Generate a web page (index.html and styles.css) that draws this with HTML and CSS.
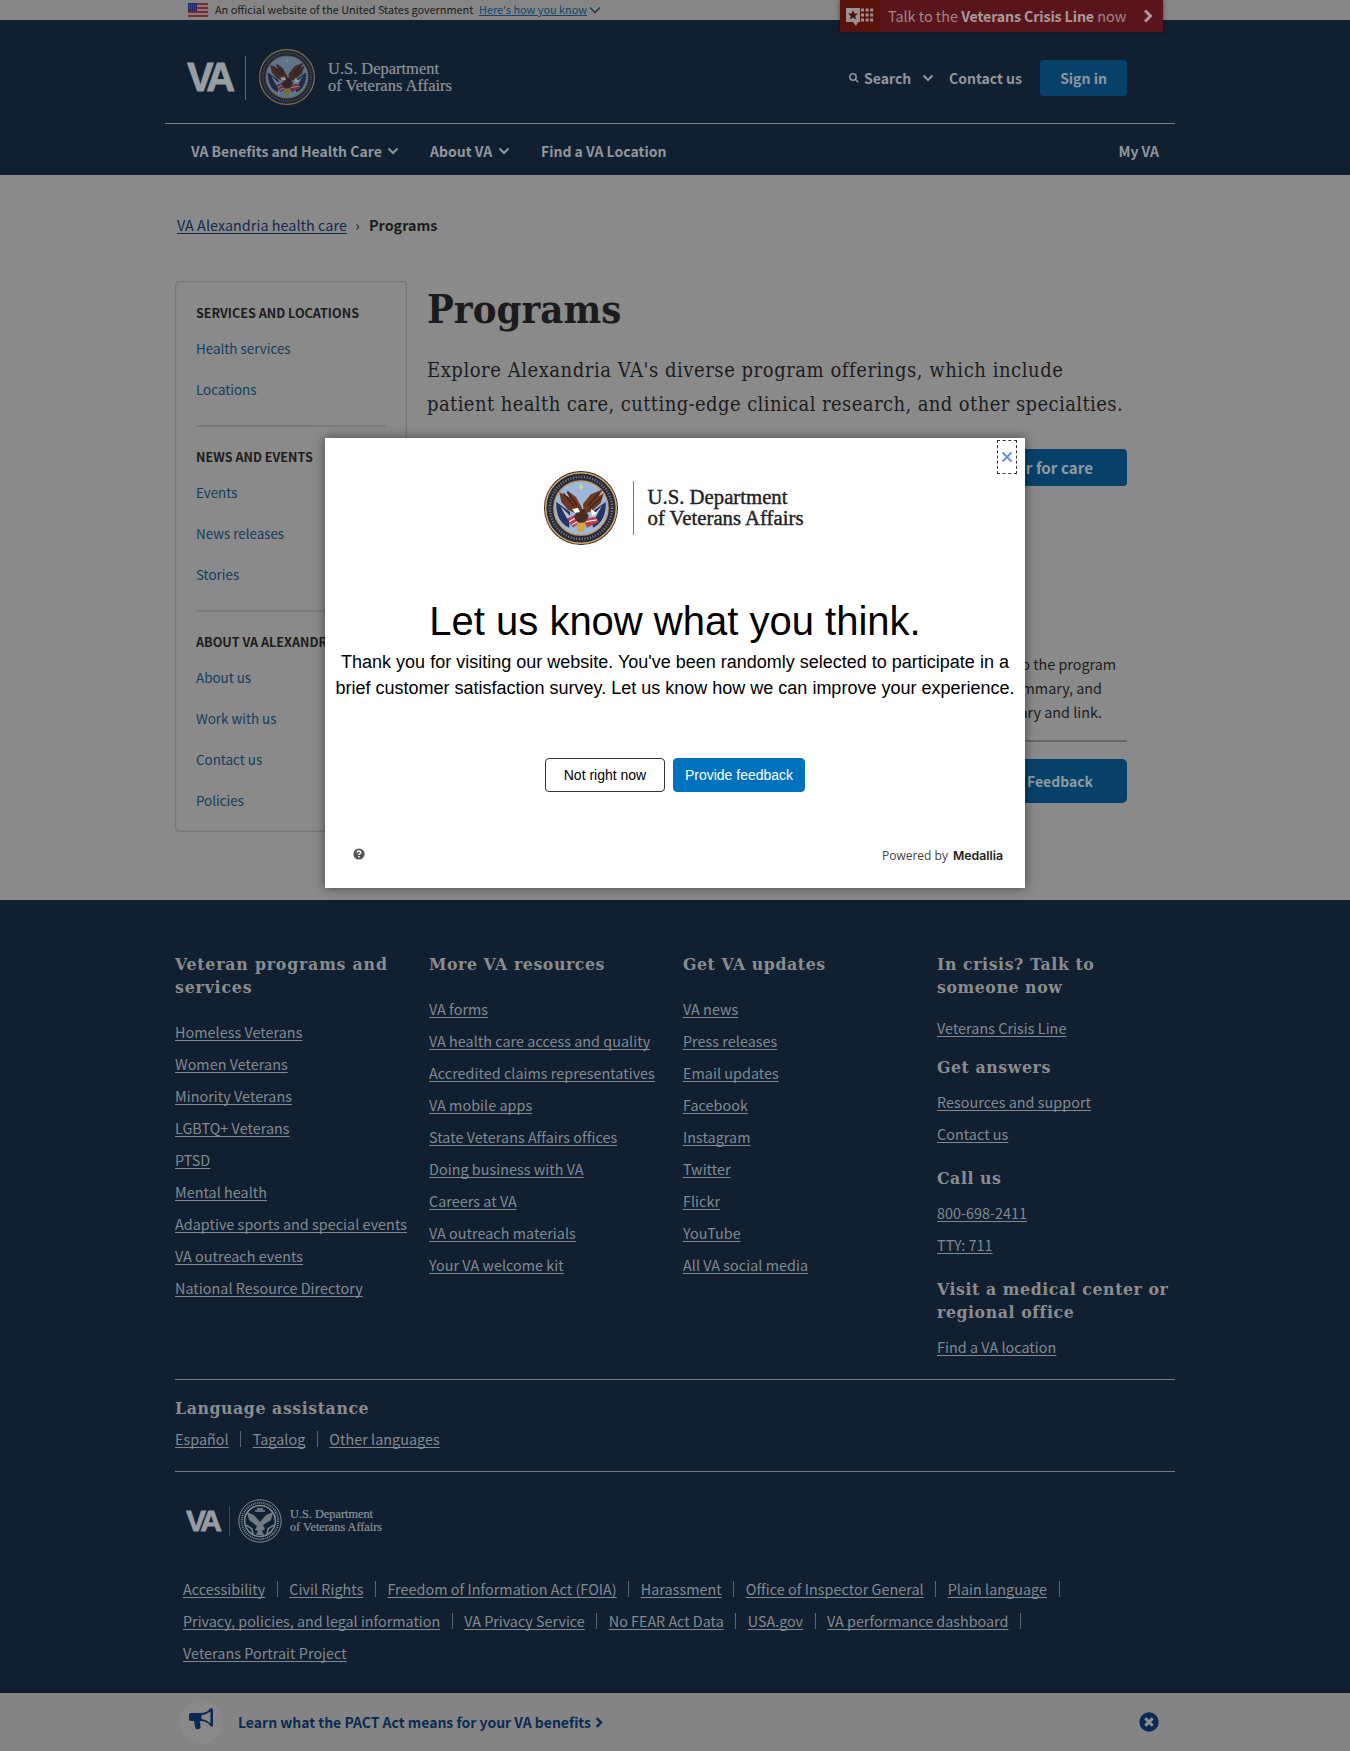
FILE: index.html
```html
<!DOCTYPE html>
<html lang="en">
<head>
<meta charset="utf-8">
<title>Programs | VA Alexandria health care</title>
<link rel="stylesheet" href="styles.css">
</head>
<body>
<svg class="defs" width="0" height="0">
  <symbol id="chev" viewBox="0 0 12 8"><path d="M1.500 1.500 6 6l4.500-4.500" fill="none" stroke="currentColor" stroke-width="2"/></symbol>
  <symbol id="chev-thin" viewBox="0 0 12 8"><path d="M1 1.500 6 6.500l5-5" fill="none" stroke="currentColor" stroke-width="1.300"/></symbol>
  <symbol id="chev-right" viewBox="0 0 10 14"><path d="m2 1.500 5.500 5.500L2 12.500" fill="none" stroke="currentColor" stroke-width="3"/></symbol>
  <symbol id="seal" viewBox="0 0 76 76">
    <circle cx="38" cy="38" r="37.500" fill="#33271d"/>
    <circle cx="38" cy="38" r="35.800" fill="none" stroke="#d0a970" stroke-width="1.600"/>
    <circle cx="38" cy="38" r="31.500" fill="none" stroke="#222b45" stroke-width="6"/>
    <circle cx="38" cy="38" r="31.500" fill="none" stroke="#8a7a60" stroke-width="2.600" stroke-dasharray="1.100 1.700"/>
    <circle cx="38" cy="38" r="27.500" fill="#9db8d8" stroke="#c69a61" stroke-width="1.400"/>
    <path d="M13 32 27 42l-1 16c-8-3-14-13-13-26zM63 32 49 42l1 16c8-3 14-13 13-26z" fill="#28345f"/>
    <path d="m17 36 11 11-4 2zM59 36 48 47l4 2z" fill="#b9c3d8"/>
    <path d="m24 49 12-6 3 8-9 7zM40 49l13-2 3 5-12 6z" fill="#b73e4b"/>
    <path d="m26 52 10-6M29 55l10-6M42 52l12-2" stroke="#f3e5e0" stroke-width="1.300"/>
    <path d="m16 22 2 10 7 8 12 5 2-7-6-11-9-7 2 7zM60 19l-12 5-8 10 1 10 8-3 9-8 3-10-5 3z" fill="#6b3820"/>
    <path d="m20 23 11 13M24 22l10 13M56 23 45 36M59 27 47 38" stroke="#3c2015" stroke-width="1.200"/>
    <path d="m34 40 7-1 5 7-4 7h-7l-4-5z" fill="#4c2b20"/>
    <path d="m29 39 6-1 2 4-5 1zM48 39l6 4-5 3z" fill="#fff"/>
    <path d="m34 52 4 2 4-2-1 10h-6z" fill="#d8a637"/>
    <path d="m36 17 2-4 2 4-2 3z" fill="#d5cfa5"/>
  </symbol>
  <symbol id="seal-mono" viewBox="0 0 44 44">
    <g fill="none" stroke="currentColor">
      <circle cx="22" cy="22" r="21.200"/>
      <circle cx="22" cy="22" r="18.200" stroke-width="2" stroke-dasharray="1 1"/>
      <circle cx="22" cy="22" r="15.400" stroke-width="1.500"/>
      <path d="m8 26 6 4 1 5m21-9-6 4-1 5" stroke-width="1.500"/>
      <path d="m19 10 6 0M17 12l10 0" stroke-width="1.500"/>
    </g>
    <path d="m9 13 2 8 8 6-2 4 3 1-2 4h8l-2-4 3-2-2-4 8-5 2-8-7 3-6 7-6-7z" fill="currentColor" opacity=".85"/>
  </symbol>
</svg>

<div class="gov-banner">
  <div class="gov-inner">
    <svg class="flag" viewBox="0 0 20 14"><path fill="#87797c" d="M0 0h20v14H0z"/><path d="M0 1h20M0 5h20M0 9h20M0 13h20" stroke="#7a2a32" stroke-width="1.900"/><path fill="#20286b" d="M0 0h9v8H0z"/><path d="M1 2h7M1 4h7M1 6h7" stroke="#6470a0" stroke-width=".8" stroke-dasharray="1 1"/></svg>
    <span class="gov-text">An official website of the United States government</span>
    <a class="gov-link">Here's how you know</a>
    <svg class="gov-chev"><use href="#chev-thin"/></svg>
  </div>
  <div class="crisis">
    <div class="crisis-icon"><svg viewBox="0 0 28 18" width="28" height="18"><path fill="#9b9390" d="M0 0h14v14h-2l-2 4-3-4H0z"/><path fill="#4a110c" d="m7 2 1.400 3.400 3.600.2-2.800 2.300 1 3.600L7 9.500l-3.200 2 1-3.600L2 5.600l3.600-.2z"/><path d="M15 2h13M15 7h13M15 12h13" stroke="#9b9390" stroke-width="3" stroke-dasharray="3 1.600"/></svg></div>
    <span class="crisis-text">Talk to the <b>Veterans Crisis Line</b> now</span>
    <svg class="crisis-chev"><use href="#chev-right"/></svg>
  </div>
</div>

<header class="header">
  <div class="header-top">
    <svg class="logo" viewBox="0 0 270 60" width="270" height="60">
      <text class="va-mark" x="0" y="43.500" font-size="40" letter-spacing="-4.500">VA</text>
      <path d="M58.500 9v44" stroke="#5b6772"/>
      <g opacity=".55"><use href="#seal" x="71" y="1" width="58" height="58"/></g>
      <text class="dept" x="141" y="27" font-size="16.500" textLength="111" lengthAdjust="spacingAndGlyphs">U.S. Department</text>
      <text class="dept" x="141" y="44" font-size="16.500" textLength="124" lengthAdjust="spacingAndGlyphs">of Veterans Affairs</text>
    </svg>
    <div class="tools">
      <svg class="search-icon" viewBox="0 0 10 10"><circle cx="4" cy="4" r="3.200" fill="none" stroke="currentColor" stroke-width="1.500"/><path d="m6.300 6.300 3 3" stroke="currentColor" stroke-width="1.500"/></svg>
      <span class="t-search">Search</span>
      <svg class="chev t-chev"><use href="#chev"/></svg>
      <span class="t-contact">Contact us</span>
      <span class="sign-in">Sign in</span>
    </div>
  </div>
  <nav class="nav">
    <span class="n1">VA Benefits and Health Care</span><svg class="chev"><use href="#chev"/></svg>
    <span class="n2">About VA</span><svg class="chev"><use href="#chev"/></svg>
    <span class="n3">Find a VA Location</span>
    <span class="n4">My VA</span>
  </nav>
</header>

<main class="main">
  <div class="crumbs"><a>VA Alexandria health care</a><i>›</i><b>Programs</b></div>
  <div class="columns">
    <aside class="side">
      <section><h2>SERVICES AND LOCATIONS</h2><a>Health services</a><a>Locations</a></section>
      <section><h2>NEWS AND EVENTS</h2><a>Events</a><a>News releases</a><a>Stories</a></section>
      <section><h2>ABOUT VA ALEXANDRIA</h2><a>About us</a><a>Work with us</a><a>Contact us</a><a>Policies</a></section>
    </aside>
    <article class="content">
      <h1>Programs</h1>
      <p class="intro"><span class="i1">Explore Alexandria VA's diverse program offerings, which include</span><br><span class="i2">patient health care, cutting-edge clinical research, and other specialties.</span></p>
      <div class="register">Register for care</div>
      <p class="notes"><span class="l1">to the program</span><span class="l2">summary, and</span><span class="l3">summary and link.</span></p>
      <hr>
      <div class="feedback">Feedback</div>
    </article>
  </div>
</main>

<footer class="footer">
  <div class="foot-inner">
    <div class="foot-cols">
      <div><h3 class="wide">Veteran programs and<br>services</h3>
        <ul><li><a>Homeless Veterans</a></li><li><a>Women Veterans</a></li><li><a>Minority Veterans</a></li><li><a>LGBTQ+ Veterans</a></li><li><a>PTSD</a></li><li><a>Mental health</a></li><li><a>Adaptive sports and special events</a></li><li><a>VA outreach events</a></li><li><a>National Resource Directory</a></li></ul></div>
      <div><h3>More VA resources</h3>
        <ul><li><a>VA forms</a></li><li><a>VA health care access and quality</a></li><li><a>Accredited claims representatives</a></li><li><a>VA mobile apps</a></li><li><a>State Veterans Affairs offices</a></li><li><a>Doing business with VA</a></li><li><a>Careers at VA</a></li><li><a>VA outreach materials</a></li><li><a>Your VA welcome kit</a></li></ul></div>
      <div><h3>Get VA updates</h3>
        <ul><li><a>VA news</a></li><li><a>Press releases</a></li><li><a>Email updates</a></li><li><a>Facebook</a></li><li><a>Instagram</a></li><li><a>Twitter</a></li><li><a>Flickr</a></li><li><a>YouTube</a></li><li><a>All VA social media</a></li></ul></div>
      <div class="contact-col"><h3>In crisis? Talk to<br>someone now</h3>
        <ul class="first"><li><a>Veterans Crisis Line</a></li></ul>
        <h3>Get answers</h3><ul><li><a>Resources and support</a></li><li><a>Contact us</a></li></ul>
        <h3>Call us</h3><ul><li><a>800-698-2411</a></li><li><a>TTY: 711</a></li></ul>
        <h3>Visit a medical center or<br>regional office</h3><ul><li><a>Find a VA location</a></li></ul></div>
    </div>
    <div class="language"><h3>Language assistance</h3>
      <div class="bar-list"><span><a>Español</a></span><span><a>Tagalog</a></span><span><a>Other languages</a></span></div>
    </div>
    <svg class="foot-logo" viewBox="0 0 200 46" width="200" height="46">
      <text class="va-mark" x="0" y="32.500" font-size="30" letter-spacing="-3.500">VA</text>
      <path d="M43.500 8v30" stroke="#3a4752"/>
      <use href="#seal-mono" x="52" y="1" width="44" height="44"/>
      <text class="dept" x="104" y="20" font-size="12" textLength="83" lengthAdjust="spacingAndGlyphs">U.S. Department</text>
      <text class="dept" x="104" y="32.500" font-size="12" textLength="92" lengthAdjust="spacingAndGlyphs">of Veterans Affairs</text>
    </svg>
    <div class="legal">
      <div class="bar-list open"><span><a>Accessibility</a></span><span><a>Civil Rights</a></span><span><a>Freedom of Information Act (FOIA)</a></span><span><a>Harassment</a></span><span><a>Office of Inspector General</a></span><span><a>Plain language</a></span></div>
      <div class="bar-list open tight"><span><a>Privacy, policies, and legal information</a></span><span><a>VA Privacy Service</a></span><span><a>No FEAR Act Data</a></span><span><a>USA.gov</a></span><span><a>VA performance dashboard</a></span></div>
      <div class="bar-list"><span><a>Veterans Portrait Project</a></span></div>
    </div>
  </div>
</footer>

<div class="promo">
  <div class="promo-icon"><svg viewBox="0 0 24 22" width="24" height="22"><path d="M0 7q0-2 2-2h9q7 0 10-4.500Q22-.5 24 1v17q-2 1.500-3-.5Q18 13 11.500 13l-.8 1q1 2 .8 3l-.5 1 1 2q-3 2-5.500.5L5 13H2q-2 0-2-2z" fill="#0b2a52"/><path d="M12.500 7.200q5-.5 9-3.700v12q-4-4-9-4.500z" fill="#888"/></svg></div>
  <b>Learn what the PACT Act means for your VA benefits</b>
  <svg class="promo-chev"><use href="#chev-right"/></svg>
  <svg class="promo-close" viewBox="0 0 20 20"><circle cx="10" cy="10" r="9.700" fill="#0b2a52"/><path d="m6.300 6.300 7.400 7.400m0-7.400-7.400 7.400" stroke="#8b9298" stroke-width="3"/></svg>
</div>

<div class="modal">
  <div class="modal-close"><svg viewBox="0 0 12 12" width="12" height="12"><path d="m1.500 1.500 9 9m0-9-9 9" stroke="#6f8fe6" stroke-width="2"/></svg></div>
  <svg class="modal-logo" viewBox="0 0 270 86" width="270" height="86">
    <use href="#seal" x="6.500" y="5.500" width="75" height="75"/>
    <path d="M96.500 16v54" stroke="#777"/>
    <text class="dept-dark" x="110.500" y="39" font-size="20.500" textLength="140" lengthAdjust="spacingAndGlyphs">U.S. Department</text>
    <text class="dept-dark" x="110.500" y="60" font-size="20.500" textLength="156" lengthAdjust="spacingAndGlyphs">of Veterans Affairs</text>
  </svg>
  <h2>Let us know what you think.</h2>
  <p>Thank you for visiting our website. You've been randomly selected to participate in a<br>brief customer satisfaction survey. Let us know how we can improve your experience.</p>
  <div class="modal-buttons"><span class="btn-no">Not right now</span><span class="btn-yes">Provide feedback</span></div>
  <div class="modal-foot">
    <svg viewBox="0 0 12 12" width="12" height="12"><circle cx="6" cy="6" r="5.600" fill="#555"/><path d="M4 4.700Q4.200 3 6 3t1.900 1.500Q7.900 5.500 6 6.300v.7M6 8v1.400" fill="none" stroke="#fff" stroke-width="1.400"/></svg>
    <span class="powered">Powered by</span><b>Medallia</b>
  </div>
</div>
</body>
</html>
```
FILE: styles.css
```css
* { box-sizing: border-box; }
body {
  margin: 0;
  position: relative;
  width: 1350px;
  height: 1751px;
  overflow: hidden;
  background: #8a8a8a;
  color: #1b1b1d;
  font-family: "Noto Sans CJK SC", "Open Sans", sans-serif;
  font-size: 14.33px;
  line-height: 24px;
}
h1, h2, h3, p, ul { margin: 0; padding: 0; }
ul { list-style: none; }
svg { display: block; flex: none; }
span, a, b { white-space: nowrap; }
.defs { position: absolute; }

.gov-banner { position: relative; height: 20px; background: #858585; }
.gov-inner { display: flex; align-items: center; padding-left: 188px; height: 20px; font-size: 10.9px; line-height: 18px; }
.flag { width: 20px; height: 14px; margin-right: 7px; }
.gov-text { width: 264px; height: 20px; }
.gov-link { width: 110px; height: 20px; color: #11466a; text-decoration: underline; }
.gov-chev { width: 12px; height: 8px; color: #11364f; }

.crisis { position: absolute; left: 840px; top: 0; width: 323px; height: 32px; display: flex; align-items: center; background: #5a151c; box-shadow: 0 0 4px rgba(0, 0, 0, .5); color: #9d8588; font-size: 14.5px; }
.crisis-icon { width: 40px; height: 32px; padding: 8px 6px; background: #57130b; }
.crisis-text { width: 256px; padding-left: 8px; letter-spacing: -.06px; }
.crisis-text b { color: #a79a9b; font-size: 14.2px; letter-spacing: -.12px; }
.crisis-chev { width: 10px; height: 14px; margin-left: 7px; color: #a79a9b; }

.header { height: 155px; background: #112030; color: #8f969d; font-size: 14px; font-weight: 700; }
.header-top { display: flex; justify-content: space-between; width: 1010px; height: 104px; margin-left: 165px; padding: 27px 48px 0 22px; border-bottom: 1px solid #747f8c; }
.va-mark { font-family: "Liberation Sans", Arial, sans-serif; font-weight: 700; fill: #979da2; stroke: #979da2; stroke-width: .8px; }
.dept { font-family: "Liberation Serif", serif; font-weight: 400; fill: #8d949b; stroke: #8d949b; stroke-width: .2px; }
.tools { display: flex; align-items: center; height: 62px; }
.search-icon { width: 10px; height: 10px; margin-right: 5px; }
.t-search { width: 58px; }
.t-contact { width: 105px; padding-left: 15px; margin-right: 1px; }
.chev { width: 12px; height: 8px; }
.sign-in { width: 87px; height: 36px; border-radius: 4px; background: #07416a; text-align: center; line-height: 36px; }
.nav { display: flex; align-items: center; height: 51px; padding: 2px 0 0 191px; }
.n1 { width: 196px; }
.n2 { width: 68px; margin-left: 31px; }
.n3 { margin-left: 31px; }
.n4 { margin-left: auto; margin-right: 191px; }

.main { height: 725px; padding: 37px 0 0 175px; }
.crumbs { display: flex; height: 25px; padding-left: 2px; line-height: 25px; }
.crumbs a { width: 170px; color: #10294a; letter-spacing: .06px; text-decoration: underline; text-underline-offset: 2px; }
.crumbs i { width: 22px; text-align: center; font-style: normal; padding-right: 1px; }
.columns { display: flex; margin-top: 44px; }
.side { width: 232px; height: 551px; padding: 19px 20px; border: 1px solid #777; border-radius: 4px; box-shadow: inset 0 0 0 1px #858585; }
.side section { border-bottom: 2px solid #7c7c7c; margin-bottom: 18px; padding-bottom: 15px; }
.side section:last-child { border: 0; margin: 0; }
.side h2 { height: 24px; margin-bottom: 3px; font-size: 12.6px; line-height: 24px; white-space: nowrap; }
.side a { display: block; height: 41px; line-height: 41px; font-size: 13.4px; color: #123d5b; }
.content { width: 700px; margin-left: 20px; }
h1, h3, .intro { font-family: "DejaVu Serif Condensed", "DejaVu Serif", serif; font-stretch: condensed; }
h1 { height: 53px; font-size: 39.7px; line-height: 56px; }
.intro { height: 68px; margin-top: 19px; font-size: 20px; line-height: 34px; white-space: nowrap; }
.i1 { letter-spacing: .54px; }
.i2 { letter-spacing: .41px; }
.register { height: 37px; margin-top: 28px; padding-right: 34px; border-radius: 4px; background: #07416a; color: #8f9aa3; font-size: 15.2px; font-weight: 700; line-height: 36px; text-align: right; }
.notes { display: flex; flex-direction: column; align-items: flex-end; margin-top: 166px; }
.l1 { padding-right: 11px; }
.l2, .l3 { padding-right: 25px; }
.content hr { height: 2px; margin: 16px 0 17px; border: 0; background: #676767; }
.feedback { height: 44px; padding-right: 34px; border-radius: 5px; background: #07416a; color: #8f9aa3; font-size: 13.97px; font-weight: 700; line-height: 44px; text-align: right; }

.footer { height: 793px; padding: 52px 0 0 175px; background: #112030; color: #828a91; border-bottom: 4px solid #111b2b; }
.foot-inner { width: 1000px; letter-spacing: .05px; }
.foot-cols { display: grid; grid-template-columns: repeat(4, 254px); height: 427px; }
.foot-inner a { text-decoration: underline; text-underline-offset: 2px; text-decoration-skip-ink: none; }
h3 { padding-top: 1px; font-size: 17.5px; line-height: 23px; letter-spacing: .58px; color: #8a8d8f; white-space: nowrap; }
h3.wide { letter-spacing: .82px; }
.foot-cols ul { margin-top: 17px; line-height: 32px; }
.foot-cols li { height: 32px; }
.contact-col ul { margin-top: 7px; margin-bottom: 16px; }
.contact-col ul.first { margin-top: 13px; margin-bottom: 11px; }
.language { height: 93px; padding-top: 16px; border: solid #737c85; border-width: 1px 0; }
.bar-list { display: flex; height: 32px; line-height: 32px; }
.language .bar-list { margin-top: 3px; }
.bar-list span { display: flex; align-items: center; }
.bar-list span:not(:last-child)::after, .open span:last-child::after { content: ""; width: 1px; height: 16px; margin: 0 11.500px; background: #59636c; }
.tight { letter-spacing: 0; }
.foot-logo { margin: 26px 0 0 11px; }
.foot-logo .dept { letter-spacing: 0; }
.legal { margin: 29px 0 0 8px; }

.promo { display: flex; align-items: center; height: 58px; padding-left: 179px; background: #848484; color: #0b2a52; }
.promo-icon { width: 44px; height: 44px; margin-right: 15px; padding: 8px 0 0 10px; border-radius: 50%; background: #898989; }
.promo b { width: 357px; font-size: 13.97px; }
.promo-chev { width: 8px; height: 11px; }
.promo-close { width: 20px; height: 20px; margin-left: auto; margin-right: 191px; }

.modal { position: absolute; left: 325px; top: 438px; width: 700px; height: 450px; padding: 2px 8px; background: #fff; box-shadow: 0 0 10px rgba(0, 0, 0, .5); color: #000; font-family: "Liberation Sans", Arial, sans-serif; text-align: center; }
.modal-close { width: 20px; height: 34px; margin-left: auto; border: 1px dashed #333; padding: 10px 3px; }
.modal-logo { margin: -9px 0 0 204px; background: #fdfdfd; }
.dept-dark { font-family: "Liberation Serif", serif; fill: #222; stroke: #222; stroke-width: .4px; }
.modal h2 { margin-top: 46px; font-size: 40px; font-weight: 400; line-height: 48px; }
.modal p { margin: 4px -4px 0; font-size: 18px; line-height: 26px; white-space: nowrap; }
.modal-buttons { display: flex; justify-content: center; gap: 8px; margin-top: 57px; font-size: 14px; line-height: 32px; }
.btn-no { width: 120px; height: 34px; border: 1px solid #333; border-radius: 4px; }
.btn-yes { width: 132px; height: 34px; border: 1px solid #0071bc; border-radius: 4px; background: #0071bc; color: #fff; }
.modal-foot { display: flex; align-items: center; height: 24px; margin-top: 50px; padding: 0 14px 0 20px; font-family: "Open Sans", sans-serif; font-size: 12px; color: #444; }
.powered { margin-left: auto; margin-right: 5px; padding-top: 3px; }
.modal-foot b { padding-top: 4px; font-family: Inter, sans-serif; font-size: 12.3px; font-weight: 600; color: #222; }
```
